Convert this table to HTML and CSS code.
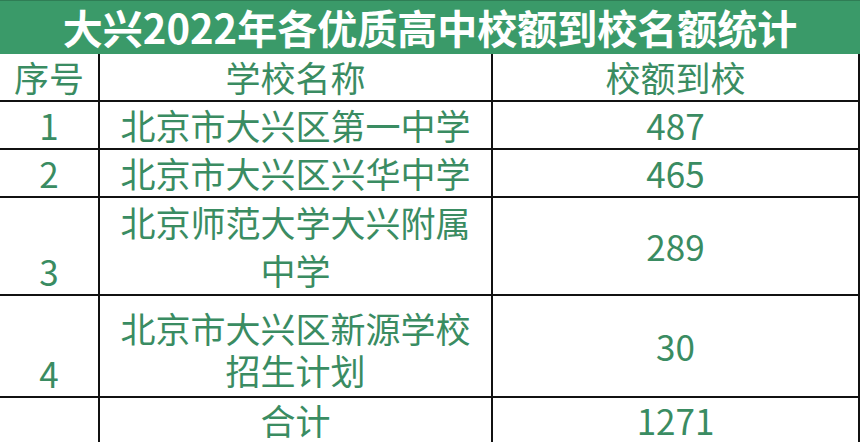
FILE: index.html
```html
<!DOCTYPE html>
<html lang="zh">
<head>
<meta charset="utf-8">
<link rel="stylesheet" href="styles.css">
</head>
<body>
<div class="sheet">
  <div class="title">大兴2022年各优质高中校额到校名额统计</div>
  <table class="stats">
    <colgroup><col class="c1"><col class="c2"><col class="c3"></colgroup>
    <tr class="r1"><td>序号</td><td>学校名称</td><td>校额到校</td></tr>
    <tr class="r1"><td>1</td><td>北京市大兴区第一中学</td><td>487</td></tr>
    <tr class="r1"><td>2</td><td>北京市大兴区兴华中学</td><td>465</td></tr>
    <tr class="r2 a"><td class="bottom">3</td><td class="name">北京师范大学大兴附属<br>中学</td><td>289</td></tr>
    <tr class="r2 b"><td class="bottom">4</td><td class="name">北京市大兴区新源学校<br>招生计划</td><td>30</td></tr>
    <tr class="r1 total"><td></td><td>合计</td><td>1271</td></tr>
  </table>
</div>
</body>
</html>
```
FILE: styles.css
```css
html, body { margin: 0; padding: 0; background: #fff; }
.sheet { width: 860px; height: 442px; overflow: hidden; font-family: "Noto Sans CJK SC", "Noto Sans", sans-serif; }
.title {
  height: 54px; box-sizing: border-box; background: #3a9a69; border-top: 1px solid #2f7d55;
  color: #fff; font-weight: 700; font-size: 40px; line-height: 52px; text-align: center;
}
.stats { border-collapse: collapse; width: 860px; table-layout: fixed; color: #3a8c62; font-size: 35px; }
.c1 { width: 99px; } .c2 { width: 393px; } .c3 { width: 367px; }
.stats td { border: 2px solid #111; text-align: center; padding: 0; vertical-align: middle; line-height: 46px; white-space: nowrap; }
.stats tr td:first-child { border-left: none; }
.stats tr:first-child td { border-top: none; }
.r1 td { height: 46px; }
.r2 td { height: 94px; }
.stats td.bottom { vertical-align: bottom; line-height: 46px; }
.a td.name { line-height: 48px; }
.b td.name { line-height: 42px; padding-top: 6px; }
.total td { height: 48px; line-height: 44px; vertical-align: top; }
```
